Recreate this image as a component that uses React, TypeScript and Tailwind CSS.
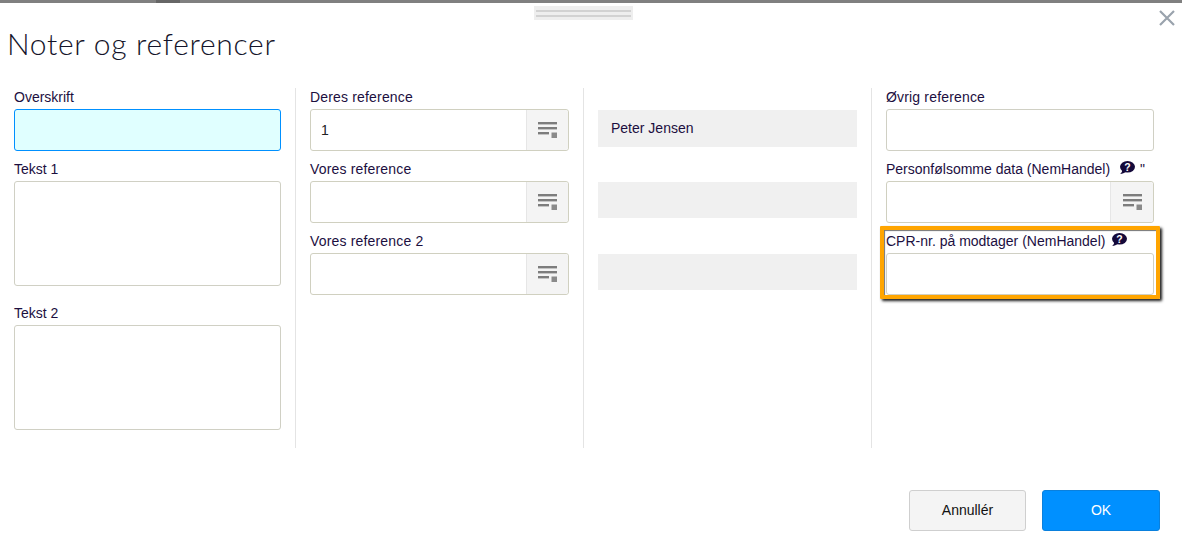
function ListIcon() {
  return (
    <svg width="20" height="16" viewBox="0 0 20 16" className="block">
      <rect x="0" y="0" width="19" height="2.4" fill="#7d7d7d" />
      <rect x="0" y="5" width="19" height="2.4" fill="#7d7d7d" />
      <rect x="0" y="10" width="11" height="2.4" fill="#7d7d7d" />
      <rect x="13.5" y="10.5" width="5.5" height="5.5" fill="#8a8a8a" />
    </svg>
  )
}

function HelpIcon() {
  return (
    <svg width="16" height="13" viewBox="0 0 16 13" className="block">
      <ellipse cx="8.500" cy="5.800" rx="7.500" ry="5.800" fill="#14093a" />
      <path d="M3.500 8.500C3.400 10.300 2.500 11.700 1.200 13c2.300-.2 4.300-1 5.800-2.500z" fill="#14093a" />
      <text x="8.500" y="9.500" textAnchor="middle" fontSize="10.500" fontWeight="700" fill="#fff" fontFamily="Liberation Sans, sans-serif">?</text>
    </svg>
  )
}

function Label({ children, wide }: { children: React.ReactNode; wide?: boolean }) {
  return (
    <div className={wide ? 'h-[21px] text-[14px] leading-[19px] tracking-[0.17px] text-[#1c0f3f] whitespace-nowrap' : 'h-[21px] text-[14px] leading-[19px] text-[#1c0f3f] whitespace-nowrap'}>
      {children}
    </div>
  )
}

function Input({ active }: { active?: boolean }) {
  return (
    <div
      className={
        active
          ? 'h-[42px] rounded-[3px] border border-[#0090ff] bg-[#e0ffff]'
          : 'h-[42px] rounded-[3px] border border-[#d0d0c4] bg-white'
      }
    />
  )
}

function PickerInput({ value, wideButton }: { value?: string; wideButton?: boolean }) {
  return (
    <div className="flex h-[42px] rounded-[3px] border border-[#d0d0c0] bg-white">
      <div className="flex-1 px-[10px] text-[14px] leading-[40px] text-[#222]">{value}</div>
      <div
        className={
          wideButton
            ? 'flex w-[43px] items-center justify-center rounded-r-[3px] border-l border-[#e6e6e6] bg-[#f4f4f4] pl-[1px]'
            : 'flex w-[42px] items-center justify-center rounded-r-[3px] border-l border-[#e6e6e6] bg-[#f4f4f4] pl-[1px]'
        }
      >
        <ListIcon />
      </div>
    </div>
  )
}

function Field({ label, wide, children }: { label: React.ReactNode; wide?: boolean; children: React.ReactNode }) {
  return (
    <div className="mb-[9px]">
      <Label wide={wide}>{label}</Label>
      {children}
    </div>
  )
}

function ReadOnly({ value, tall }: { value?: string; tall?: boolean }) {
  return (
    <div className="h-[72px] pt-[22px]">
      <div
        className={
          tall
            ? 'h-[37px] bg-[#f0f0f0] px-[13px] text-[14px] leading-[36px] text-[#1c0f3f]'
            : 'h-[36px] bg-[#f0f0f0] px-[13px] text-[14px] leading-[36px] text-[#1c0f3f]'
        }
      >
        {value}
      </div>
    </div>
  )
}

export default function App() {
  return (
    <div className="relative h-[554px] w-[1182px] overflow-hidden bg-white font-['Liberation_Sans',Arial,sans-serif]">
      <div className="flex h-[3px]">
        <div className="w-[156px] bg-[#808080]" />
        <div className="w-[24px] bg-[#666]" />
        <div className="flex-1 bg-[#808080]" />
      </div>

      <div className="flex h-[85px] flex-col">
        <div className="ml-[534px] mt-[3px] flex h-[14px] w-[99px] flex-col gap-[3px] bg-[#eeeeee] px-[2px] pt-[4px]">
          <div className="h-[2px] bg-[#d2d2d2]" />
          <div className="h-[2px] bg-[#d2d2d2]" />
        </div>
        <h1 className="ml-[7px] mt-[4px] font-['Lato',sans-serif] text-[30px] font-light leading-[38px] tracking-[0.7px] text-[#14142a]">
          Noter og referencer
        </h1>
      </div>

      <svg width="16" height="16" viewBox="0 0 16 16" className="absolute left-[1159px] top-[10px]">
        <path d="M1 1l14 14M15 1L1 15" stroke="#9aa3ad" strokeWidth="2.2" fill="none" />
      </svg>

      <div className="grid h-[360px] grid-cols-[296px_288px_288px_1fr]">
        <div className="border-r border-[#e4e4e4] pl-[14px] pr-[14px]">
          <Field label="Overskrift">
            <Input active />
          </Field>
          <Label>Tekst 1</Label>
          <div className="h-[105px] rounded-[3px] border border-[#d0d0c4] bg-white" />
          <div className="mt-[18px]">
            <Label>Tekst 2</Label>
            <div className="h-[105px] rounded-[3px] border border-[#d0d0c4] bg-white" />
          </div>
        </div>

        <div className="border-r border-[#e4e4e4] pl-[14px] pr-[14px]">
          <Field label="Deres reference" wide>
            <PickerInput value="1" />
          </Field>
          <Field label="Vores reference" wide>
            <PickerInput />
          </Field>
          <Field label="Vores reference 2" wide>
            <PickerInput />
          </Field>
        </div>

        <div className="border-r border-[#e4e4e4] pl-[14px] pr-[14px]">
          <ReadOnly value="Peter Jensen" tall />
          <ReadOnly />
          <ReadOnly />
        </div>

        <div className="pl-[14px] pr-[28px]">
          <Field label="Øvrig reference" wide>
            <Input />
          </Field>
          <Field
            label={
              <span className="flex items-start">
                Personfølsomme data (NemHandel)
                <span className="ml-[9px] mt-[1px]">
                  <HelpIcon />
                </span>
                <span className="ml-[5px]">"</span>
              </span>
            }
          >
            <PickerInput wideButton />
          </Field>
          <div className="relative">
            <Label>
              <span className="flex items-start">
                CPR-nr. på modtager (NemHandel)
                <span className="ml-[6px] mt-[1px]">
                  <HelpIcon />
                </span>
              </span>
            </Label>
            <Input />
            <div className="absolute -bottom-[4px] -left-[6px] -right-[6px] -top-[6px] rounded-[1px] border-[4px] border-[#ffa500] shadow-[2px_2px_3px_rgba(0,0,0,0.9),inset_1px_1px_1px_rgba(0,0,0,0.55)]" />
          </div>
        </div>
      </div>

      <div className="mt-[42px] flex justify-end gap-[16px] pr-[22px]">
        <button className="h-[41px] w-[117px] rounded-[3px] border border-[#cfcfcf] bg-[#f4f4f4] text-[14px] text-[#111]">
          Annullér
        </button>
        <button className="h-[41px] w-[118px] rounded-[3px] border border-[#0a80dd] bg-[#0090ff] text-[14px] text-white">
          OK
        </button>
      </div>
    </div>
  )
}
